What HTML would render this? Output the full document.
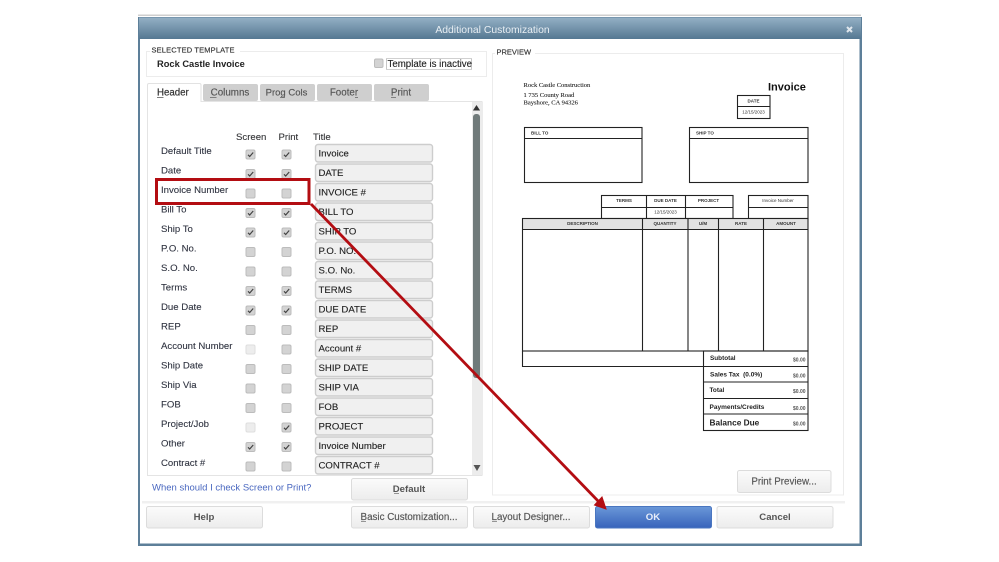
<!DOCTYPE html>
<html><head><meta charset="utf-8"><style>
html,body{margin:0;padding:0;background:#fff;width:999px;height:562px;overflow:hidden}
svg{display:block;filter:blur(.3px)}
text{font-family:"Liberation Sans",sans-serif;font-size:10px;fill:#333}
.l{font-size:9.6px;fill:#2f3340;stroke:#2f3340;stroke-width:.1}
.v{font-size:9.6px;fill:#222;stroke:#222;stroke-width:.12}
.b{font-size:9.6px;font-weight:bold;fill:#555;text-anchor:middle}
.t{font-size:9.8px;fill:#555;text-anchor:middle;stroke:#555;stroke-width:.15}
.s{font-family:"Liberation Serif",serif;font-size:6.5px;fill:#222;stroke:#222;stroke-width:.1}
.m{font-size:4.5px;font-weight:bold;fill:#333;text-anchor:middle}
.n{font-size:6.4px;font-weight:bold;fill:#222}
.z{font-size:5px;font-weight:bold;fill:#555}
.ln{fill:none;stroke:#222;stroke-width:1.1}
</style></head><body>
<svg width="999" height="562" viewBox="0 0 999 562" xmlns="http://www.w3.org/2000/svg">
<defs>
<linearGradient id="tb" x1="0" y1="0" x2="0" y2="1"><stop offset="0" stop-color="#94b0c5"/><stop offset="1" stop-color="#557892"/></linearGradient>
<linearGradient id="ok" x1="0" y1="0" x2="0" y2="1"><stop offset="0" stop-color="#6b98d8"/><stop offset="1" stop-color="#3763bb"/></linearGradient>
<linearGradient id="bt" x1="0" y1="0" x2="0" y2="1"><stop offset="0" stop-color="#fbfbfb"/><stop offset="1" stop-color="#ececec"/></linearGradient>
<g id="c"><rect x="-4.500" y="-4.500" width="9" height="9" rx="1.500" fill="#d3d3d3" stroke="#bcbcbc"/></g>
<g id="k"><rect x="-4.500" y="-4.500" width="9" height="9" rx="1.500" fill="#d3d3d3" stroke="#bcbcbc"/><path d="M-2.500 0.300L-0.800 2L2.700 -2" fill="none" stroke="#444" stroke-width="1.200"/></g>
<g id="d"><rect x="-4.500" y="-4.500" width="9" height="9" rx="1.500" fill="#ededed" stroke="#dedede"/></g>
<g id="i"><rect x="0.500" y="0.500" width="117" height="17.500" rx="2.500" fill="#f0f0f0" stroke="#cdcdcd" stroke-width="1.400"/></g>
</defs>

<rect x="138" y="14.500" width="723" height="1.500" fill="#cfcfcf"/>
<rect x="138" y="17" width="724" height="529" fill="#5d7f99"/>
<rect x="140" y="39" width="719.500" height="504.500" fill="#fff"/>
<rect x="139" y="17.500" width="722" height="21.500" fill="url(#tb)"/>
<text x="492.500" y="33" text-anchor="middle" style="font-size:10.400px;fill:#e8eef3">Additional Customization</text>
<path d="M847 27L852 32M852 27L847 32" stroke="#dfe6ec" stroke-width="2"/>

<!-- selected template -->
<rect x="146.500" y="51.500" width="340" height="25" fill="#fff" stroke="#ececec"/>
<rect x="150" y="46" width="90" height="9" fill="#fff"/>
<text x="151.500" y="52.500" style="font-size:7.500px;fill:#333;stroke:#333;stroke-width:.15;letter-spacing:.15px">SELECTED TEMPLATE</text>
<text x="157" y="67" style="font-size:9.300px;font-weight:bold;fill:#222">Rock Castle Invoice</text>
<rect x="374.500" y="59" width="8.500" height="8.500" rx="1.500" fill="#d3d3d3" stroke="#bcbcbc"/>
<rect x="386.500" y="58.500" width="85" height="11" fill="none" stroke="#444" stroke-width=".6" stroke-dasharray="1 1"/>
<text x="387.500" y="66.800" class="v" style="font-size:9.700px">Template is inactive</text>

<!-- tabs -->
<rect x="147.500" y="101.500" width="334.500" height="374" fill="#fff" stroke="#e4e4e4"/>
<rect x="203" y="84" width="55" height="17" rx="2" fill="#cfcfcf"/>
<rect x="260" y="84" width="55" height="17" rx="2" fill="#cfcfcf"/>
<rect x="317" y="84" width="55" height="17" rx="2" fill="#cfcfcf"/>
<rect x="374" y="84" width="55" height="17" rx="2" fill="#cfcfcf"/>
<path d="M147.500 102V85Q147.500 83.500 149 83.500H199.500Q201 83.500 201 85V102" fill="#fff" stroke="#e2e2e2"/>
<text x="157" y="95.500" style="font-size:9.700px;fill:#333;stroke:#333;stroke-width:.2">Header</text>
<path d="M157 97.500h6.500" stroke="#444" stroke-width=".7"/>
<text x="230" y="95.500" class="t">Columns</text>
<text x="286.500" y="95.500" class="t" style="font-size:9.500px">Prog Cols</text>
<text x="344" y="95.500" class="t">Footer</text>
<text x="401" y="95.500" class="t">Print</text>
<path d="M210 97.500h6.500M280 97.500h5M355 97.500h3M391 97.500h5" stroke="#666" stroke-width=".7"/>

<!-- scrollbar -->
<rect x="472" y="102" width="11" height="373" fill="#ececec"/>
<path d="M476.500 105L472.900 110.500H480.100Z" fill="#333"/>
<rect x="473" y="114" width="7" height="264" rx="3" fill="#707a7a"/>
<path d="M473.500 465H480.500L477 471Z" fill="#555"/>

<!-- header labels -->
<text x="236" y="140" class="l" style="fill:#333">Screen</text>
<text x="278.500" y="140" class="l" style="fill:#333">Print</text>
<text x="313" y="140" class="l" style="fill:#333">Title</text>

<text x="161" y="154" class="l">Default Title</text>
<text x="161" y="173.500" class="l">Date</text>
<text x="161" y="193" class="l">Invoice Number</text>
<text x="161" y="212.500" class="l">Bill To</text>
<text x="161" y="232" class="l">Ship To</text>
<text x="161" y="251.500" class="l">P.O. No.</text>
<text x="161" y="271" class="l">S.O. No.</text>
<text x="161" y="290.500" class="l">Terms</text>
<text x="161" y="310" class="l">Due Date</text>
<text x="161" y="329.500" class="l">REP</text>
<text x="161" y="349" class="l">Account Number</text>
<text x="161" y="368.500" class="l">Ship Date</text>
<text x="161" y="388" class="l">Ship Via</text>
<text x="161" y="407.500" class="l">FOB</text>
<text x="161" y="427" class="l">Project/Job</text>
<text x="161" y="446.500" class="l">Other</text>
<text x="161" y="466" class="l">Contract #</text>

<!-- checks -->
<use href="#k" x="250.500" y="154.500"/><use href="#k" x="286.500" y="154.500"/>
<use href="#k" x="250.500" y="174"/><use href="#k" x="286.500" y="174"/>
<use href="#c" x="250.500" y="193.500"/><use href="#c" x="286.500" y="193.500"/>
<use href="#k" x="250.500" y="213"/><use href="#k" x="286.500" y="213"/>
<use href="#k" x="250.500" y="232.500"/><use href="#k" x="286.500" y="232.500"/>
<use href="#c" x="250.500" y="252"/><use href="#c" x="286.500" y="252"/>
<use href="#c" x="250.500" y="271.500"/><use href="#c" x="286.500" y="271.500"/>
<use href="#k" x="250.500" y="291"/><use href="#k" x="286.500" y="291"/>
<use href="#k" x="250.500" y="310.500"/><use href="#k" x="286.500" y="310.500"/>
<use href="#c" x="250.500" y="330"/><use href="#c" x="286.500" y="330"/>
<use href="#d" x="250.500" y="349.500"/><use href="#c" x="286.500" y="349.500"/>
<use href="#c" x="250.500" y="369"/><use href="#c" x="286.500" y="369"/>
<use href="#c" x="250.500" y="388.500"/><use href="#c" x="286.500" y="388.500"/>
<use href="#c" x="250.500" y="408"/><use href="#c" x="286.500" y="408"/>
<use href="#d" x="250.500" y="427.500"/><use href="#k" x="286.500" y="427.500"/>
<use href="#k" x="250.500" y="447"/><use href="#k" x="286.500" y="447"/>
<use href="#c" x="250.500" y="466.500"/><use href="#c" x="286.500" y="466.500"/>

<!-- inputs -->
<use href="#i" x="315" y="144"/><text x="318.500" y="156.500" class="v">Invoice</text>
<use href="#i" x="315" y="163.500"/><text x="318.500" y="176" class="v">DATE</text>
<use href="#i" x="315" y="183"/><text x="318.500" y="195.500" class="v">INVOICE #</text>
<use href="#i" x="315" y="202.500"/><text x="318.500" y="215" class="v">BILL TO</text>
<use href="#i" x="315" y="222"/><text x="318.500" y="234.500" class="v">SHIP TO</text>
<use href="#i" x="315" y="241.500"/><text x="318.500" y="254" class="v">P.O. NO.</text>
<use href="#i" x="315" y="261"/><text x="318.500" y="273.500" class="v">S.O. No.</text>
<use href="#i" x="315" y="280.500"/><text x="318.500" y="293" class="v">TERMS</text>
<use href="#i" x="315" y="300"/><text x="318.500" y="312.500" class="v">DUE DATE</text>
<use href="#i" x="315" y="319.500"/><text x="318.500" y="332" class="v">REP</text>
<use href="#i" x="315" y="339"/><text x="318.500" y="351.500" class="v">Account #</text>
<use href="#i" x="315" y="358.500"/><text x="318.500" y="371" class="v">SHIP DATE</text>
<use href="#i" x="315" y="378"/><text x="318.500" y="390.500" class="v">SHIP VIA</text>
<use href="#i" x="315" y="397.500"/><text x="318.500" y="410" class="v">FOB</text>
<use href="#i" x="315" y="417"/><text x="318.500" y="429.500" class="v">PROJECT</text>
<use href="#i" x="315" y="436.500"/><text x="318.500" y="449" class="v">Invoice Number</text>
<use href="#i" x="315" y="456"/><text x="318.500" y="468.500" class="v">CONTRACT #</text>

<text x="152" y="490.500" style="font-size:9.500px;fill:#4a68c0">When should I check Screen or Print?</text>

<!-- preview -->
<rect x="492.500" y="53.500" width="351" height="441.500" fill="#fff" stroke="#ececec"/>
<rect x="495" y="48" width="40" height="9" fill="#fff"/>
<text x="496.500" y="54.500" style="font-size:7.500px;fill:#333;stroke:#333;stroke-width:.15">PREVIEW</text>

<text x="523.500" y="87" class="s">Rock Castle Construction</text>
<text x="523.500" y="97" class="s">1 735 County Road</text>
<text x="523.500" y="104.500" class="s">Bayshore, CA 94326</text>
<text x="768" y="90.500" style="font-size:11px;font-weight:bold;fill:#111">Invoice</text>

<rect x="737.500" y="95.500" width="32.500" height="23" class="ln"/>
<path d="M737.500 106.500H770" class="ln"/>
<text x="753.500" y="102.300" class="m">DATE</text>
<text x="753.500" y="113.500" class="m" style="font-weight:normal">12/15/2023</text>

<rect x="524.500" y="127.500" width="117.500" height="55" class="ln"/>
<path d="M524.500 138.500H642" class="ln"/>
<text x="531" y="134.300" class="m" style="text-anchor:start">BILL TO</text>
<rect x="689.500" y="127.500" width="118.500" height="55" class="ln"/>
<path d="M689.500 138.500H808" class="ln"/>
<text x="696" y="134.300" class="m" style="text-anchor:start">SHIP TO</text>

<rect x="601.500" y="195.500" width="131.500" height="23" class="ln"/>
<path d="M601.500 207.500H733M646.500 195.500V218.500M685.500 195.500V218.500" class="ln"/>
<text x="624" y="202" class="m">TERMS</text>
<text x="665.500" y="202" class="m">DUE DATE</text>
<text x="708.500" y="202" class="m">PROJECT</text>
<text x="665.500" y="213.500" class="m" style="font-weight:normal">12/15/2023</text>
<rect x="748.500" y="195.500" width="59.500" height="23" class="ln"/>
<path d="M748.500 207.500H808" class="ln"/>
<text x="778" y="202" class="m" style="font-weight:normal">Invoice Number</text>

<rect x="522.500" y="218.500" width="285.500" height="11" fill="#e2e2e2" stroke="#222"/>
<rect x="522.500" y="218.500" width="285.500" height="132.500" class="ln"/>
<path d="M642.500 218.500V351M688 218.500V351M718.500 218.500V351M763.500 218.500V351" class="ln"/>
<text x="582.500" y="224.800" class="m">DESCRIPTION</text>
<text x="665" y="224.800" class="m">QUANTITY</text>
<text x="703" y="224.800" class="m">U/M</text>
<text x="741" y="224.800" class="m">RATE</text>
<text x="786" y="224.800" class="m">AMOUNT</text>
<path d="M522.500 351V366.500H703.500" class="ln"/>
<rect x="703.500" y="351" width="104.500" height="79.500" class="ln"/>
<path d="M703.500 366.500H808M703.500 382H808M703.500 398.500H808M703.500 414H808" class="ln"/>
<text x="710" y="360" class="n">Subtotal</text>
<text x="710" y="376.500" class="n" style="font-size:6.500px">Sales Tax&#160; (0.0%)</text>
<text x="709.500" y="392" class="n">Total</text>
<text x="709.500" y="409" class="n" style="font-size:6.500px">Payments/Credits</text>
<text x="709.500" y="425.500" style="font-size:8.300px;font-weight:bold;fill:#222">Balance Due</text>
<text x="793" y="361.500" class="z">$0.00</text>
<text x="793" y="377.500" class="z">$0.00</text>
<text x="793" y="393" class="z">$0.00</text>
<text x="793" y="410" class="z">$0.00</text>
<text x="793" y="425.500" class="z">$0.00</text>

<!-- buttons -->
<rect x="737.500" y="470.500" width="93.500" height="22" rx="2" fill="url(#bt)" stroke="#dcdcdc"/>
<text x="784" y="484.500" class="t">Print Preview...</text>
<rect x="351.500" y="478.500" width="116" height="21.500" rx="2" fill="url(#bt)" stroke="#dcdcdc"/>
<text x="409" y="492" class="b">Default</text>
<rect x="142" y="501" width="703" height="2.500" fill="#f0f0f0"/>
<rect x="146.500" y="506.500" width="116" height="21.500" rx="2" fill="url(#bt)" stroke="#dcdcdc"/>
<text x="204" y="520" class="b">Help</text>
<rect x="351.500" y="506.500" width="116" height="21.500" rx="2" fill="url(#bt)" stroke="#dcdcdc"/>
<text x="409" y="520" class="t">Basic Customization...</text>
<rect x="473.500" y="506.500" width="116" height="21.500" rx="2" fill="url(#bt)" stroke="#dcdcdc"/>
<text x="531" y="520" class="t">Layout Designer...</text>
<rect x="595.500" y="506.500" width="116" height="21.500" rx="2" fill="url(#ok)" stroke="#4a76c0"/>
<text x="653" y="520" class="b" style="fill:#e8eefa">OK</text>
<rect x="717" y="506.500" width="116" height="21.500" rx="2" fill="url(#bt)" stroke="#dcdcdc"/>
<text x="775" y="520" class="b">Cancel</text>
<path d="M361 521.500h5M492 521.500h5M394 493.500h5" stroke="#777" stroke-width=".7"/>

<!-- annotation -->
<rect x="156.500" y="179.500" width="152.500" height="24" fill="none" stroke="#b30d12" stroke-width="3"/>
<path d="M311 204L600 503" stroke="#b30d12" stroke-width="2.800" fill="none"/>
<path d="M606 509L594.500 505L602 497Z" fill="#b30d12" stroke="#b30d12"/>
</svg>
</body></html>
